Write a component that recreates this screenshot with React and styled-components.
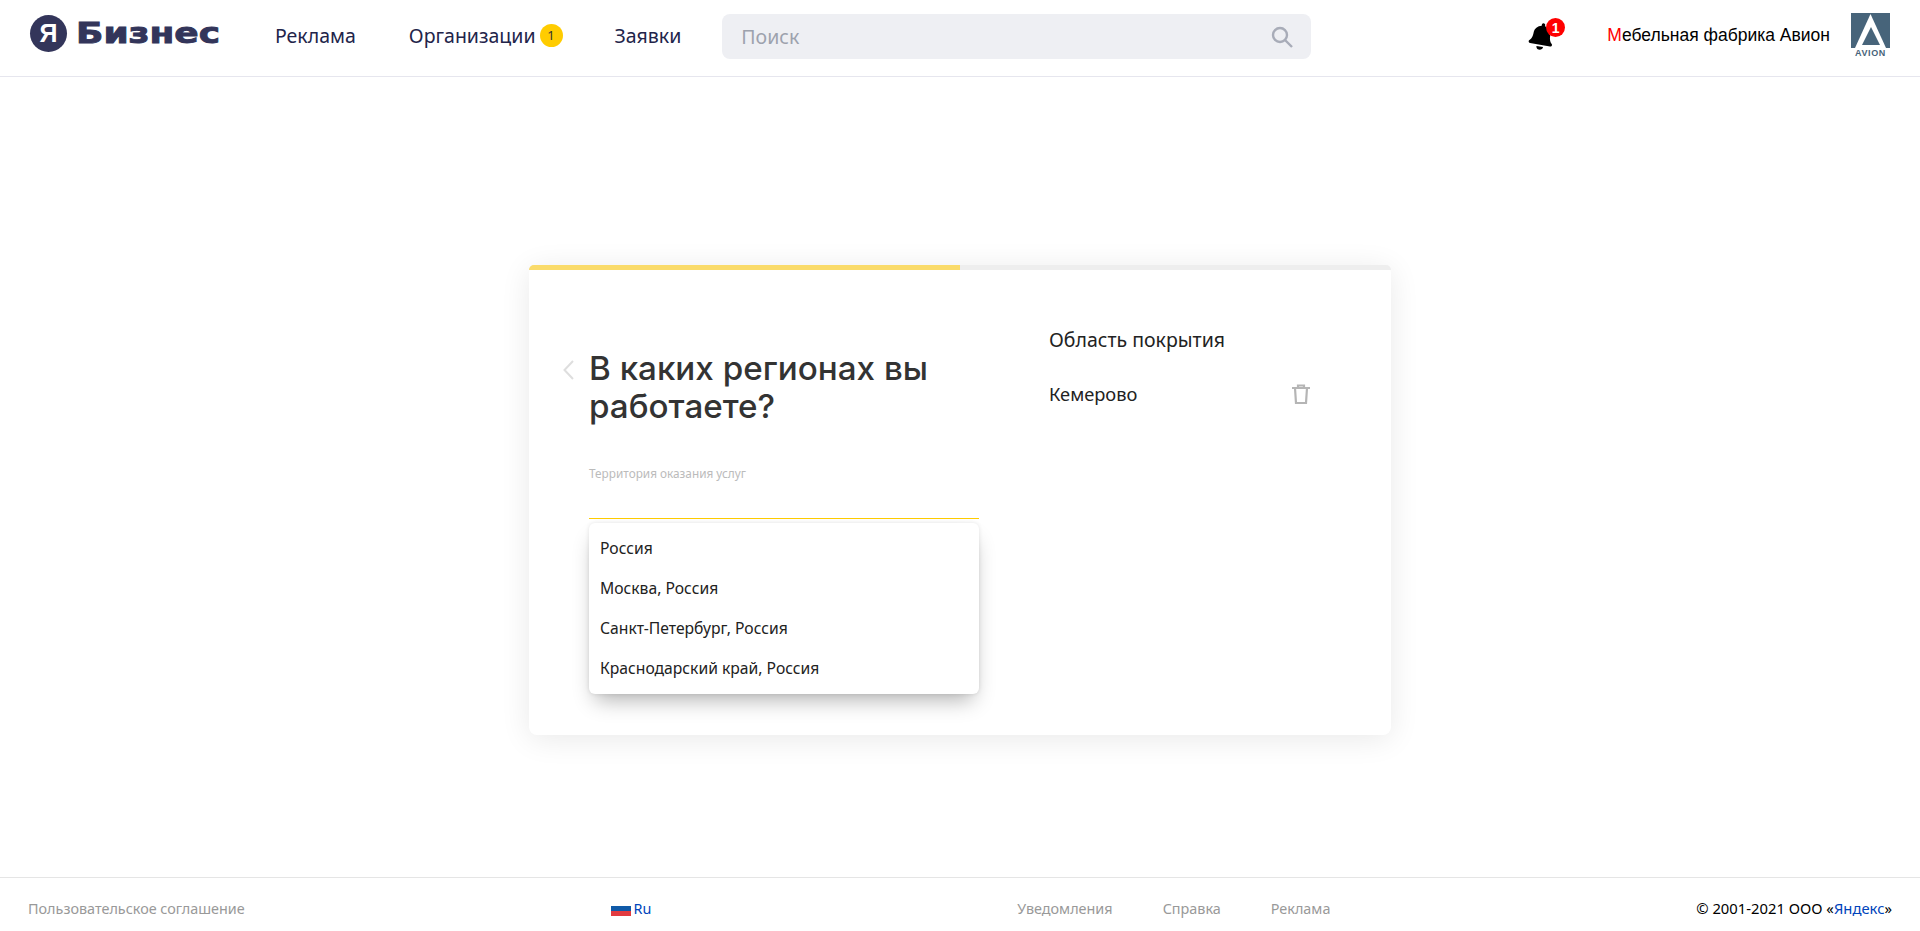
import React from 'react';
import styled, { createGlobalStyle } from 'styled-components';
import { FaBell } from 'react-icons/fa';

const GlobalStyle = createGlobalStyle`
html, body {
  margin: 0;
  padding: 0;
  background: #fff;
  font-family: "Noto Sans", Arial, sans-serif;
}
* {
  box-sizing: border-box;
}
`;

const Page = styled.div`
display: flex;
flex-direction: column;
min-height: 100vh;
`;

const Header = styled.header`
display: flex;
align-items: center;
height: 77px;
padding: 0 30px 6px;
border-bottom: 1px solid #e6e6ee;
`;

const Logo = styled.div`
display: flex;
align-items: center;
gap: 9px;
margin: -3px 55px 0 0;
color: #33355a;
`;

const LogoCircle = styled.span`
display: flex;
align-items: center;
justify-content: center;
width: 37px;
height: 37px;
border-radius: 50%;
background: #33355a;
color: #fff;
font: 700 25px "Liberation Sans", Arial, sans-serif;
`;

const LogoText = styled.span`
display: inline-block;
width: 144px;
font: 700 29px/37px "DejaVu Sans", Arial, sans-serif;
-webkit-text-stroke: 0.9px #33355a;
white-space: nowrap;
transform: scaleX(1.24);
transform-origin: left center;
`;

const NavLink = styled.a`
display: flex;
align-items: center;
margin-right: ${props => props.gap || 53}px;
font-size: 19.5px;
color: #22244a;
`;

const NavBadge = styled.span`
display: flex;
align-items: center;
justify-content: center;
width: 23px;
height: 23px;
margin-left: 4px;
border-radius: 50%;
background: #ffcc00;
color: #333;
font-size: 13px;
`;

const Search = styled.div`
display: flex;
align-items: center;
justify-content: space-between;
width: 589px;
height: 45px;
margin-top: 3px;
padding: 0 17px 0 19px;
border-radius: 8px;
background: #eeeff3;
color: #9da2ad;
font-size: 19.5px;
`;

const HeaderRight = styled.div`
display: flex;
align-items: center;
margin-left: auto;
`;

const BellWrap = styled.div`
position: relative;
display: flex;
margin: 3px 52px 0 0;
font-size: 27px;
color: #000;
svg {
  transform: rotate(10deg);
}
`;

const BellBadge = styled.span`
position: absolute;
top: -5px;
left: 18px;
display: flex;
align-items: center;
justify-content: center;
width: 19px;
height: 19px;
border-radius: 50%;
background: #f00;
color: #fff;
font: 700 14px "Liberation Sans", Arial, sans-serif;
`;

const CompanyName = styled.span`
margin-right: 21px;
font: 17.5px "Liberation Sans", Arial, sans-serif;
color: #000;
b {
  font-weight: 400;
  color: #f00;
}
`;

const Avion = styled.div`
display: flex;
flex-direction: column;
align-items: center;
width: 39px;
`;

const AvionText = styled.span`
font: 700 9px/10px "Liberation Sans", Arial, sans-serif;
letter-spacing: 0.6px;
color: #47647a;
`;

const Main = styled.main`
flex: 1;
display: flex;
justify-content: center;
padding-top: 188px;
`;

const Card = styled.section`
width: 862px;
height: 470px;
border-radius: 8px;
background: #fff;
box-shadow: 0 4px 30px rgba(0, 0, 0, 0.09);
`;

const Progress = styled.div`
height: 5px;
border-radius: 8px 8px 0 0;
background: #eeeeee;
overflow: hidden;
`;

const ProgressFill = styled.div`
height: 100%;
background: #fadb6a;
`;

const CardBody = styled.div`
display: flex;
padding: 55px 0 0 34px;
`;

const LeftColumn = styled.div`
width: 486px;
`;

const TitleRow = styled.div`
display: flex;
gap: 15px;
padding-top: 24px;
`;

const BackIcon = styled.svg`
flex: none;
width: 11px;
height: 20px;
margin-top: 11px;
`;

const Title = styled.h1`
width: 390px;
margin: 0;
font: 500 33.2px/38px Inter, "Open Sans", sans-serif;
color: #333;
`;

const Field = styled.div`
position: relative;
width: 390px;
margin-left: 26px;
padding-top: 40px;
`;

const FieldLabel = styled.div`
height: 53.5px;
font: 11.8px/16px "Noto Sans", Arial, sans-serif;
color: #bbb;
border-bottom: 1.5px solid #ffcc00;
`;

const Dropdown = styled.ul`
position: absolute;
top: 100%;
left: 0;
right: 0;
height: 171px;
margin: 4px 0 0;
padding: 5px 11px;
list-style: none;
border-radius: 6px;
background: #fff;
box-shadow: 0 12px 20px -6px rgba(0, 0, 0, 0.3), 0 0 4px rgba(0, 0, 0, 0.1);
`;

const DropdownItem = styled.li`
height: 40px;
font: 15.7px/40px "Noto Sans", Arial, sans-serif;
color: #222;
`;

const RightColumn = styled.div`
width: 261px;
`;

const CoverageTitle = styled.h2`
margin: 0;
font: 400 19.5px/30px "Noto Sans", Arial, sans-serif;
color: #222;
`;

const CoverageRow = styled.div`
display: flex;
align-items: center;
justify-content: space-between;
margin-top: 24px;
font: 18.3px/30px "Noto Sans", Arial, sans-serif;
color: #222;
`;

const Footer = styled.footer`
display: flex;
align-items: center;
justify-content: space-between;
height: 54px;
padding: 7px 28px 0;
border-top: 1px solid #e5e5e5;
font: 14.4px "Noto Sans", Arial, sans-serif;
color: #999;
`;

const Lang = styled.div`
display: flex;
align-items: center;
gap: 3px;
color: #0044bb;
`;

const FooterLinks = styled.div`
display: flex;
gap: 50px;
`;

const Copyright = styled.div`
font-size: 14.8px;
color: #000;
a {
  color: #0044bb;
}
`;

const SearchIcon = () => (
  <svg width="24" height="24" viewBox="0 0 24 24" fill="none" stroke="#a8acb8" strokeWidth="2.4">
    <circle cx="10" cy="10" r="7" />
    <path d="M15 15l7 7" />
  </svg>
);

const TrashIcon = () => (
  <svg width="18" height="20" viewBox="0 0 18 20" fill="none" stroke="#b5b5b5" strokeWidth="2.2">
    <path d="M0 4h18M6 4V1.5h6V4M3 4l1 15h10l1-15" />
  </svg>
);

const AvionMark = () => (
  <svg width="39" height="35" viewBox="0 0 39 35">
    <rect width="39" height="35" fill="#47647a" />
    <polygon points="19.5,1 4,35 35,35" fill="#fff" />
    <polygon points="20,14 11,32 29,32" fill="#47647a" />
  </svg>
);

const regions = ['Россия', 'Москва, Россия', 'Санкт-Петербург, Россия', 'Краснодарский край, Россия'];

export default function App() {
  return (
    <Page>
      <GlobalStyle />
      <Header>
        <Logo>
          <LogoCircle>Я</LogoCircle>
          <LogoText>Бизнес</LogoText>
        </Logo>
        <NavLink>Реклама</NavLink>
        <NavLink gap={52}>
          Организации
          <NavBadge>1</NavBadge>
        </NavLink>
        <NavLink gap={41}>Заявки</NavLink>
        <Search>
          Поиск
          <SearchIcon />
        </Search>
        <HeaderRight>
          <BellWrap>
            <FaBell />
            <BellBadge>1</BellBadge>
          </BellWrap>
          <CompanyName><b>М</b>ебельная фабрика Авион</CompanyName>
          <Avion>
            <AvionMark />
            <AvionText>AVION</AvionText>
          </Avion>
        </HeaderRight>
      </Header>
      <Main>
        <Card>
          <Progress>
            <ProgressFill style={{ width: '50%' }} />
          </Progress>
          <CardBody>
            <LeftColumn>
              <TitleRow>
                <BackIcon viewBox="0 0 11 20" fill="none" stroke="#dedede" strokeWidth="2">
                  <path d="M10 1L1.5 10l8.5 9" />
                </BackIcon>
                <Title>В каких регионах вы работаете?</Title>
              </TitleRow>
              <Field>
                <FieldLabel>Территория оказания услуг</FieldLabel>
                <Dropdown>
                  {regions.map(r => <DropdownItem key={r}>{r}</DropdownItem>)}
                </Dropdown>
              </Field>
            </LeftColumn>
            <RightColumn>
              <CoverageTitle>Область покрытия</CoverageTitle>
              <CoverageRow>
                Кемерово
                <TrashIcon />
              </CoverageRow>
            </RightColumn>
          </CardBody>
        </Card>
      </Main>
      <Footer>
        <span>Пользовательское соглашение</span>
        <Lang>
          <svg width="20" height="15" viewBox="0 0 20 15">
            <rect width="20" height="5" fill="#fff" />
            <rect y="5" width="20" height="5" fill="#0f5aa8" />
            <rect y="10" width="20" height="5" fill="#e23b40" />
          </svg>
          Ru
        </Lang>
        <FooterLinks>
          <span>Уведомления</span>
          <span>Справка</span>
          <span>Реклама</span>
        </FooterLinks>
        <Copyright>© 2001-2021 ООО «<a>Яндекс</a>»</Copyright>
      </Footer>
    </Page>
  );
}
